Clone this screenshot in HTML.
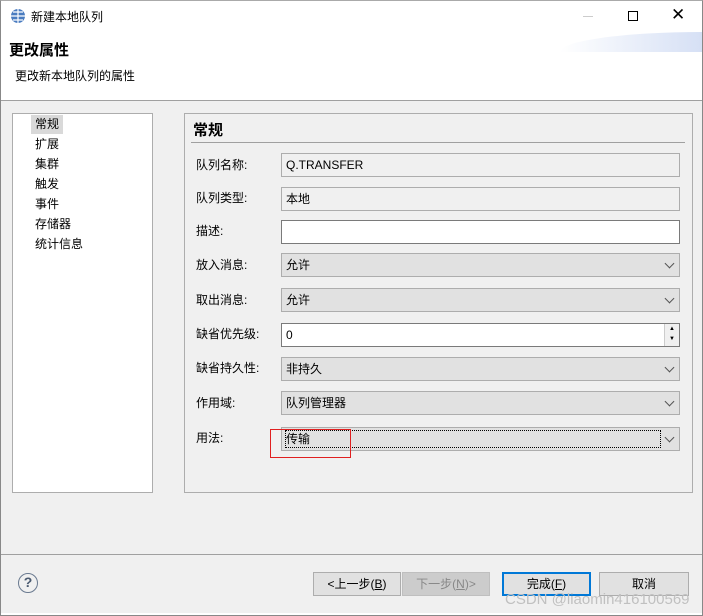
<!DOCTYPE html><html><head><meta charset="utf-8"><style>
*{box-sizing:border-box}
body{margin:0;width:703px;height:616px;overflow:hidden;font-family:"Liberation Sans","Noto Sans CJK SC",sans-serif;font-size:12px;color:#000;background:#fff;position:relative}
.a{position:absolute}
.lbl{position:absolute;left:196px}
.in{position:absolute;left:281px;width:399px;height:24px;border:1px solid #adadad;padding-left:4px;line-height:22px}
.w{background:#fff;border-color:#7a7a7a}
.ro{background:#f0f0f0}
.cb{background:#e1e1e1}
.cb:after{content:"";position:absolute;right:6px;top:6px;width:6px;height:6px;border-right:1px solid #555;border-bottom:1px solid #555;transform:rotate(45deg)}
.btn{position:absolute;top:572px;height:24px;border:1px solid #adadad;background:#e1e1e1;text-align:center;line-height:22px}
</style></head><body>
<div class="a" style="left:0;top:0;width:703px;height:616px;border:1px solid #888;border-top:1px solid #aaa"></div>
<svg class="a" style="left:10px;top:8px" width="16" height="16"><circle cx="8" cy="8" r="7" fill="#4a7cc0"/><path d="M8 1v14M1 8h14M3 4h10M3 12h10" stroke="#fff" stroke-width="1.2"/></svg>
<div class="a" style="left:31px;top:8px">新建本地队列</div>
<div class="a" style="left:583px;top:16px;width:10px;border-top:1px solid #ccc"></div>
<div class="a" style="left:628px;top:11px;width:10px;height:10px;border:1px solid #000"></div>
<div class="a" style="left:671px;top:5px;font-size:17px">✕</div>
<div class="a" style="left:560px;top:32px;width:142px;height:20px;background:linear-gradient(90deg,#fff,#d6e0f5);border-radius:100% 0 0 0/100% 0 0 0"></div>
<div class="a" style="left:9px;top:39px;font-size:15px;font-weight:bold">更改属性</div>
<div class="a" style="left:15px;top:67px">更改新本地队列的属性</div>
<div class="a" style="left:1px;top:100px;width:701px;height:513px;background:#f0f0f0;border-top:1px solid #a0a0a0"></div>
<div class="a" style="left:12px;top:113px;width:141px;height:380px;background:#fff;border:1px solid #adadad"></div>
<div class="a" style="left:31px;top:115px;width:32px;height:19px;background:#d9d9d9"></div>
<div class="a" style="left:35px;top:114px;line-height:20px">常规<br>扩展<br>集群<br>触发<br>事件<br>存储器<br>统计信息</div>
<div class="a" style="left:184px;top:113px;width:509px;height:380px;border:1px solid #adadad"></div>
<div class="a" style="left:193px;top:119px;font-size:15px;font-weight:bold">常规</div>
<div class="a" style="left:191px;top:142px;width:494px;border-top:1px solid #a0a0a0"></div>
<div class="lbl" style="top:156px">队列名称:</div><div class="in ro" style="top:153px">Q.TRANSFER</div>
<div class="lbl" style="top:189px">队列类型:</div><div class="in ro" style="top:187px">本地</div>
<div class="lbl" style="top:222px">描述:</div><div class="in w" style="top:220px"></div>
<div class="lbl" style="top:256px">放入消息:</div><div class="in cb" style="top:253px">允许</div>
<div class="lbl" style="top:291px">取出消息:</div><div class="in cb" style="top:288px">允许</div>
<div class="lbl" style="top:325px">缺省优先级:</div><div class="in w" style="top:323px">0<div class="a" style="right:0;top:0;width:15px;height:22px;background:#f0f0f0;border-left:1px solid #ccc;font-size:6px;line-height:10px;text-align:center">▲<br>▼</div></div>
<div class="lbl" style="top:359px">缺省持久性:</div><div class="in cb" style="top:357px">非持久</div>
<div class="lbl" style="top:394px">作用域:</div><div class="in cb" style="top:391px">队列管理器</div>
<div class="lbl" style="top:429px">用法:</div><div class="in cb" style="top:427px"><div class="a" style="left:3px;top:2px;width:376px;height:18px;border:1px dotted #000"></div>传输</div>
<div class="a" style="left:270px;top:429px;width:81px;height:29px;border:1px solid #e02020"></div>
<div class="a" style="left:1px;top:554px;width:701px;border-top:1px solid #a0a0a0"></div>
<div class="a" style="left:18px;top:573px;width:20px;height:20px;border:1.5px solid #6a7a90;border-radius:50%;text-align:center;line-height:17px;font-size:14px;color:#4a5a70;font-weight:bold">?</div>
<div class="btn" style="left:313px;width:88px">&lt;上一步(<u>B</u>)</div>
<div class="btn" style="left:402px;width:88px;background:#ccc;border-color:#bfbfbf;color:#888">下一步(<u>N</u>)&gt;</div>
<div class="btn" style="left:502px;width:89px;border:2px solid #0078d7;line-height:20px">完成(<u>F</u>)</div>
<div class="btn" style="left:599px;width:90px">取消</div>
<div class="a" style="left:505px;top:591px;font-size:15px;color:#c0c0c0">CSDN @liaomin416100569</div>
</body></html>
